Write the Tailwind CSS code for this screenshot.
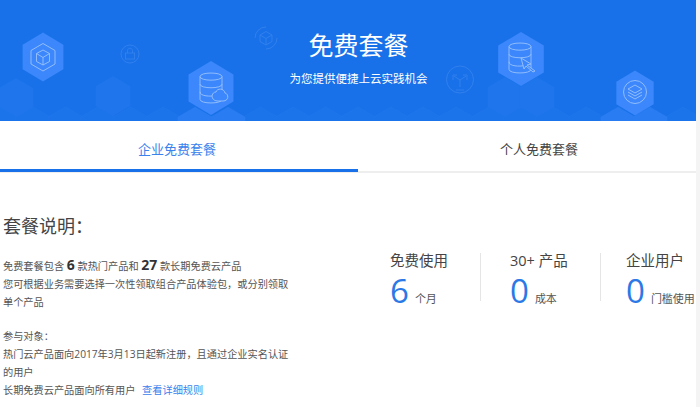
<!DOCTYPE html>
<html lang="zh"><head><meta charset="utf-8"><script src="https://cdn.jsdelivr.net/npm/@tailwindcss/browser@4"></script></head>
<body class="bg-[#f4f4f4] overflow-hidden font-['Open_Sans','Noto_Sans_CJK_SC',sans-serif]">
<div class="w-[696px] h-[407px] overflow-hidden bg-white">
<header class="relative h-[121px] bg-[#1871e8] text-white text-center overflow-hidden">
<svg class="absolute inset-0" width="696" height="121" viewBox="0 0 696 121" fill="none">
<defs>
<path id="s" d="M0-20 17.300-10V10L0 20-17.300 10V-10Z"/>
<path id="db" d="M-11-12C-11-17 11-17 11-12V12C11 17-11 17-11 12ZM-11-12C-11-7 11-7 11-12M-11-4C-11 1 11 1 11-4M-11 4C-11 9 0 9 4 8"/>
</defs>
<g fill="#1e75ec">
<use href="#s" transform="translate(16 98)"/><use href="#s" transform="translate(113 96)"/>
<use href="#s" transform="translate(505 97)"/><use href="#s" transform="translate(537 97)"/>
</g>
<g fill="#1c74ea" stroke="#2478ec" stroke-width=".5">
<use href="#s" transform="translate(0 127)"/><use href="#s" transform="translate(32.600 127)"/><use href="#s" transform="translate(65.500 127)"/><use href="#s" transform="translate(98 127)"/><use href="#s" transform="translate(130.500 127)"/><use href="#s" transform="translate(163 127)"/><use href="#s" transform="translate(195 127)"/><use href="#s" transform="translate(228 127)"/><use href="#s" transform="translate(260.500 127)"/><use href="#s" transform="translate(293 127)"/><use href="#s" transform="translate(325.500 127)"/><use href="#s" transform="translate(358 127)"/><use href="#s" transform="translate(391 127)"/><use href="#s" transform="translate(423 127)"/><use href="#s" transform="translate(456 127)"/><use href="#s" transform="translate(489 127)"/><use href="#s" transform="translate(521 127)"/><use href="#s" transform="translate(553 127)"/><use href="#s" transform="translate(586 127)"/><use href="#s" transform="translate(618 127)"/><use href="#s" transform="translate(650 127)"/><use href="#s" transform="translate(683 127)"/>
</g>
<g fill="#2a7cf2">
<use href="#s" transform="translate(195 127)"/><use href="#s" transform="translate(228 127)"/><use href="#s" transform="translate(618 127)"/><use href="#s" transform="translate(650 127)"/>
</g>
<g fill="#3b87fb">
<use href="#s" transform="translate(43 57)scale(1.18 1.22)"/><use href="#s" transform="translate(211 88)scale(1.3 1.35)"/><use href="#s" transform="translate(521 59)scale(1.32 1.35)"/><use href="#s" transform="translate(635 93)scale(1.08 1.12)"/>
</g>
<g stroke="#9cc3fd" stroke-width=".9">
<path d="M43 43.500 55 50.500V64L43 71 31 64V50.500Z"/><path d="M43 50 49.500 53.500V61.500L43 65 36.500 61.500V53.500ZM36.500 53.500 43 57.500 49.500 53.500M43 57.500V65"/>
<use href="#db" transform="translate(211 88)scale(1 .95)"/>
<path d="M218 101H223C229 101 229 94 225 93 224 88 217 88 216 92 211 92 210 101 218 101Z" fill="#3b87fb"/>
<use href="#db" transform="translate(520 58)scale(1 .95)"/>
<path d="M521 58 531 64 527 65 535 71 533 72 526 66 524 69Z" fill="#3b87fb"/>
<circle cx="635" cy="92" r="11.500"/><path d="M635 85 642 89 635 93 628 89ZM628 92 635 96 642 92M628 95 635 99 642 95"/>
</g>
<g stroke="#3481ee" stroke-width=".9">
<circle cx="130" cy="54" r="9"/><rect x="125.500" y="53" width="9" height="6"/><path d="M127.500 53V50.500C127.500 47.500 132.500 47.500 132.500 50.500V53"/>
<path d="M277 38A11 11 0 0 1 266 49M255 38A11 11 0 0 1 266 27M266 31.500 272 35V41.500L266 45 260 41.500V35ZM260 35 266 38.500 272 35M266 38.500V45"/>
<circle cx="460" cy="79.500" r="13.500"/><path d="M460 80V87M456 90H464M460 80 454 76M460 80 466 76M453 80V75H457M467 80V75H463"/>
</g>
</svg>
<div class="relative w-[717px] pt-[27px]">
<h1 class="text-[25px] leading-[36px]">免费套餐</h1>
<p class="mt-[7px] text-[11.500px] leading-[18px]">为您提供便捷上云实践机会</p>
</div>
</header>
<nav class="grid grid-cols-2 w-[724px] -ml-[4px] h-[52px] border-b-2 border-[#eeeeee] text-[13px] text-center">
<a class="h-[51px] leading-[57px] -mb-px border-b-[3px] border-[#1871e8] text-[#3a82ec]">企业免费套餐</a>
<a class="leading-[57px] text-[#444444]">个人免费套餐</a>
</nav>
<main class="flex mt-[41px] text-[#555555]">
<section class="w-[288px] ml-[3px] shrink-0 text-[10.200px] leading-[17.800px]">
<h2 class="text-[18px] leading-[24px] text-[#444444] mb-[18px]">套餐说明：</h2>
<p>免费套餐包含 <b class="text-[14px] text-[#333333]">6</b> 款热门产品和 <b class="text-[14px] text-[#333333]">27</b> 款长期免费云产品</p>
<p>您可根据业务需要选择一次性领取组合产品体验包，或分别领取单个产品</p>
<p class="mt-[17px]">参与对象：</p>
<p>热门云产品面向2017年3月13日起新注册，且通过企业实名认证的用户</p>
<p>长期免费云产品面向所有用户 <a class="ml-1 text-[#3a82ec]">查看详细规则</a></p>
</section>
<section class="flex mt-[39px] h-[48px] ml-[99px] whitespace-nowrap">
<div class="w-[91px] border-r border-[#e5e5e5]">
<h3 class="text-[14.500px] leading-[16px] text-[#444444]">免费使用</h3>
<p class="text-[11px] leading-[44px]"><span class="text-[33px] text-[#2b79e6] mr-[6px]">6</span>个月</p>
</div>
<div class="w-[120px] pl-[29px] border-r border-[#e5e5e5]">
<h3 class="text-[14.500px] leading-[16px] text-[#444444]">30+ 产品</h3>
<p class="text-[11px] leading-[44px]"><span class="text-[33px] text-[#2b79e6] mr-[6px]">0</span>成本</p>
</div>
<div class="pl-[25px]">
<h3 class="text-[14.500px] leading-[16px] text-[#444444]">企业用户</h3>
<p class="text-[11px] leading-[44px]"><span class="text-[33px] text-[#2b79e6] mr-[6px]">0</span>门槛使用</p>
</div>
</section>
</main>
</div>
</body></html>
